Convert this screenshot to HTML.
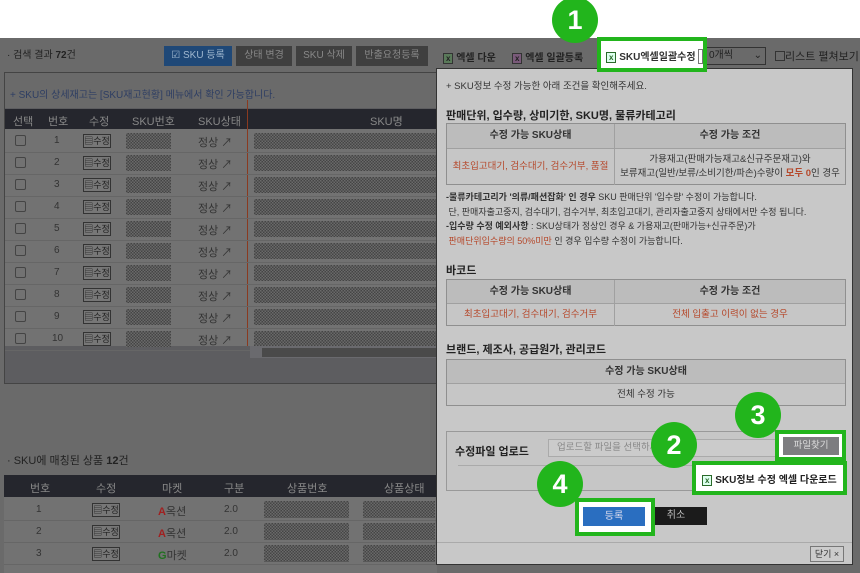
<!DOCTYPE html>
<html style="width:860px;height:573px;overflow:hidden"><head><meta charset="utf-8"><style>
*{margin:0;padding:0;box-sizing:border-box}
body{width:860px;height:573px;overflow:hidden;position:relative;background:#fff;font-family:"Liberation Sans","Noto Sans CJK KR",sans-serif;font-size:10px;color:#222}
.a{position:absolute}
.hatch{background:repeating-conic-gradient(#454545 0 25%,#6a6a6a 0 50%) 0 0/3px 3px}
.g{border:4px solid #22b51c}
.c{position:absolute;border-radius:50%;background:#22b51c;color:#fff;font-weight:bold;font-size:27px;text-align:center;font-family:"Liberation Sans",sans-serif}
.tb{position:absolute;background:#c6c6c6;border:1px solid #8f8f8f}
.tb .h{background:#bcbcbc;border-bottom:1px solid #a0a0a0;font-weight:bold;text-align:center;color:#333}
.red{color:#b5482b}
</style></head><body>
<div class="a" style="left:0;top:38px;width:860px;height:535px;background:#6a6a6a"></div>
<div class="a" style="left:7px;top:46px;color:#222;font-size:10px">· 검색 결과 <b>72</b>건</div>
<div class="a" style="left:164px;top:46px;width:68px;height:20px;background:#1f4877;color:#9fb7cf;text-align:center;line-height:20px">☑ SKU 등록</div>
<div class="a" style="left:236px;top:46px;width:56px;height:20px;background:#3f3f3f;color:#888;text-align:center;line-height:20px">상태 변경</div>
<div class="a" style="left:296px;top:46px;width:56px;height:20px;background:#3f3f3f;color:#888;text-align:center;line-height:20px">SKU 삭제</div>
<div class="a" style="left:356px;top:46px;width:72px;height:20px;background:#3f3f3f;color:#888;text-align:center;line-height:20px">반출요청등록</div>
<div class="a" style="left:443px;top:49px;font-weight:bold;color:#222"><span style="border:1px solid #333;background:#5a7a5a;padding:0 2px;font-size:8px">x</span> 엑셀 다운</div>
<div class="a" style="left:512px;top:49px;font-weight:bold;color:#222"><span style="border:1px solid #333;background:#7a5a7a;padding:0 2px;font-size:8px">x</span> 엑셀 일괄등록</div>
<div class="a" style="left:706px;top:47px;width:60px;height:18px;border:1px solid #333;color:#222;line-height:16px;padding-left:2px">0개씩 <span style="float:right;padding-right:3px">⌄</span></div>
<div class="a" style="left:775px;top:48px;color:#222;font-size:11px"><span style="display:inline-block;width:10px;height:10px;border:1px solid #333;vertical-align:-1px"></span>리스트 펼쳐보기</div>
<div class="a" style="left:4px;top:72px;width:440px;height:312px;border:1px solid #444;background:#5d5d60"></div>
<div class="a" style="left:5px;top:73px;width:438px;height:35px;background:#6a6a6a"></div>
<div class="a" style="left:10px;top:86px;color:#2e3e63">+ SKU의 상세재고는 [SKU재고현황] 메뉴에서 확인 가능합니다.</div>
<div class="a" style="left:5px;top:109px;width:438px;height:20px;background:#25262d"></div>
<div class="a" style="left:5px;top:113px;width:438px;color:#888;font-size:11px">
<span class="a" style="left:8px">선택</span><span class="a" style="left:43px">번호</span><span class="a" style="left:84px">수정</span><span class="a" style="left:127px">SKU번호</span><span class="a" style="left:193px">SKU상태</span><span class="a" style="left:365px">SKU명</span></div>
<div class="a" style="left:5px;top:129px;width:438px;height:217px;background:#727272"></div>
<div class="a" style="left:247px;top:100px;width:1px;height:246px;background:#8a3a20"></div>
<div id="rows"></div>
<div class="a" style="left:250px;top:346px;width:190px;height:12px;background:#6a6a6e"></div>
<div class="a" style="left:262px;top:348px;width:180px;height:9px;background:#4a4a4a"></div>
<div class="a" style="left:7px;top:452px;color:#222;font-size:11px">· SKU에 매칭된 상품 <b>12</b>건</div>
<div class="a" style="left:4px;top:475px;width:433px;height:22px;background:#25262d"></div>
<div class="a" style="left:4px;top:480px;width:433px;color:#888;font-size:11px">
<span class="a" style="left:26px">번호</span><span class="a" style="left:92px">수정</span><span class="a" style="left:158px">마켓</span><span class="a" style="left:220px">구분</span><span class="a" style="left:283px">상품번호</span><span class="a" style="left:380px">상품상태</span></div>
<div class="a" style="left:4px;top:497px;width:433px;height:76px;background:#727272"></div>
<div id="brows"></div>
<div class="a" style="left:436px;top:68px;width:417px;height:497px;background:#c8c8c8;border:1px solid #333"></div>
<div class="a" style="left:446px;top:78px;color:#333;font-size:9.5px">+ SKU정보 수정 가능한 아래 조건을 확인해주세요.</div>
<div class="a" style="left:446px;top:107px;font-weight:bold;font-size:11px;color:#222">판매단위, 입수량, 상미기한, SKU명, 물류카테고리</div>
<div class="tb" style="left:446px;top:123px;width:400px;height:62px">
<div class="h" style="height:25px;line-height:24px;display:flex"><div style="width:168px;border-right:1px solid #a0a0a0">수정 가능 SKU상태</div><div style="flex:1">수정 가능 조건</div></div>
<div style="display:flex;height:36px;font-size:9.5px"><div class="red" style="width:168px;border-right:1px solid #a0a0a0;text-align:center;line-height:36px">최초입고대기, 검수대기, 검수거부, 품절</div><div style="flex:1;text-align:center;line-height:14px;padding-top:4px;color:#333">가용재고(판매가능재고&amp;신규주문재고)와<br>보류재고(일반/보류/소비기한/파손)수량이 <b class="red">모두 0</b>인 경우</div></div></div>
<div class="a" style="left:446px;top:190px;font-size:9px;color:#333;line-height:14.5px"><b>-물류카테고리가 '의류/패션잡화' 인 경우</b> SKU 판매단위 '입수량' 수정이 가능합니다.<br>&nbsp;단, 판매자출고중지, 검수대기, 검수거부, 최초입고대기, 관리자출고중지 상태에서만 수정 됩니다.<br><b>-입수량 수정 예외사항</b> : SKU상태가 정상인 경우 &amp; 가용재고(판매가능+신규주문)가<br>&nbsp;<span class="red">판매단위입수량의 50%미만</span> 인 경우 입수량 수정이 가능합니다.</div>
<div class="a" style="left:446px;top:262px;font-weight:bold;font-size:11px;color:#222">바코드</div>
<div class="tb" style="left:446px;top:279px;width:400px;height:47px">
<div class="h" style="height:24px;line-height:23px;display:flex"><div style="width:168px;border-right:1px solid #a0a0a0">수정 가능 SKU상태</div><div style="flex:1">수정 가능 조건</div></div>
<div class="red" style="display:flex;height:22px;line-height:21px;text-align:center;font-size:9.5px"><div style="width:168px;border-right:1px solid #a0a0a0">최초입고대기, 검수대기, 검수거부</div><div style="flex:1">전체 입출고 이력이 없는 경우</div></div></div>
<div class="a" style="left:446px;top:341px;font-weight:bold;font-size:11px;color:#222">브랜드, 제조사, 공급원가, 관리코드</div>
<div class="tb" style="left:446px;top:359px;width:400px;height:47px">
<div class="h" style="height:24px;line-height:23px">수정 가능 SKU상태</div>
<div style="height:22px;line-height:21px;text-align:center;color:#333;font-size:9.5px">전체 수정 가능</div></div>
<div class="a" style="left:446px;top:431px;width:400px;height:60px;border:1px solid #999;background:#c6c6c6"></div>
<div class="a" style="left:458px;top:465px;width:380px;height:1px;background:#aaa"></div>
<div class="a" style="left:455px;top:443px;font-weight:bold;font-size:11px;color:#222">수정파일 업로드</div>
<div class="a" style="left:548px;top:439px;width:230px;height:18px;border:1px solid #aaa;background:#cbcbcb;color:#888;line-height:16px;padding-left:8px;font-size:9.5px">업로드할 파일을 선택하세요</div>
<div class="a" style="left:645px;top:507px;width:62px;height:18px;background:#1b1b1b;color:#bbb;text-align:center;line-height:18px">취소</div>
<div class="a" style="left:437px;top:542px;width:415px;height:1px;background:#aaa"></div>
<div class="a" style="left:810px;top:546px;width:34px;height:16px;border:1px solid #777;background:#ccc;color:#333;text-align:center;line-height:14px;font-size:9px">닫기 ×</div>
<div class="a g" style="left:597px;top:37px;width:110px;height:35px;background:#fff"></div>
<div class="a" style="left:606px;top:48px;font-weight:bold;color:#333;font-size:10px"><span style="border:1px solid #2a6a2a;color:#2a6a2a;background:#dfe;padding:0 2px;font-size:8px">x</span> SKU엑셀일괄수정 <span style="display:inline-block;width:5px;height:15px;border:1px solid #777;vertical-align:-4px"></span></div>
<div class="c" style="left:552px;top:-3px;width:46px;height:46px;line-height:46px">1</div>
<div class="a g" style="left:775px;top:430px;width:71px;height:31px;background:#fff"></div>
<div class="a" style="left:783px;top:437px;width:56px;height:18px;background:#7d7d80;color:#ddd;text-align:center;line-height:18px;font-size:9.5px">파일찾기</div>
<div class="a g" style="left:692px;top:461px;width:155px;height:34px;background:#fff"></div>
<div class="a" style="left:702px;top:471px;font-weight:bold;color:#222;font-size:10px"><span style="border:1px solid #2a6a2a;color:#2a6a2a;background:#dfe;padding:0 2px;font-size:8px">x</span> SKU정보 수정 엑셀 다운로드</div>
<div class="c" style="left:735px;top:392px;width:46px;height:46px;line-height:46px">3</div>
<div class="c" style="left:651px;top:422px;width:46px;height:46px;line-height:46px">2</div>
<div class="a g" style="left:575px;top:498px;width:80px;height:38px;background:#fff"></div>
<div class="a" style="left:583px;top:507px;width:62px;height:19px;background:#2a6ec0;color:#dde;text-align:center;line-height:19px">등록</div>
<div class="c" style="left:537px;top:461px;width:46px;height:46px;line-height:46px">4</div>
<script>
var r='';for(var i=0;i<10;i++){var y=131+i*22;
r+='<div class="a" style="left:5px;top:'+(y+21)+'px;width:432px;height:1px;background:#666"></div>'+
'<div class="a" style="left:15px;top:'+(y+4)+'px;width:11px;height:11px;border:1px solid #444;border-radius:2px"></div>'+
'<div class="a" style="left:'+(i==9?52:54)+'px;top:'+(y+4)+'px;color:#333">'+(i+1)+'</div>'+
'<div class="a" style="left:83px;top:'+(y+3)+'px;width:28px;height:14px;border:1px solid #333;background:#777;color:#222;font-size:9px;line-height:12px;text-align:center">▤수정</div>'+
'<div class="a hatch" style="left:126px;top:'+(y+2)+'px;width:45px;height:16px"></div>'+
'<div class="a" style="left:198px;top:'+(y+3)+'px;color:#333;font-size:11px">정상 ↗</div>'+
'<div class="a hatch" style="left:254px;top:'+(y+2)+'px;width:186px;height:16px"></div>';}
document.getElementById('rows').innerHTML=r;
var m=[['A','옥션','#a02020'],['A','옥션','#a02020'],['G','마켓','#207020']];r='';
for(var i=0;i<3;i++){var y=499+i*22;
r+='<div class="a" style="left:4px;top:'+(y+21)+'px;width:433px;height:1px;background:#666"></div>'+
'<div class="a" style="left:36px;top:'+(y+5)+'px;color:#333">'+(i+1)+'</div>'+
'<div class="a" style="left:92px;top:'+(y+4)+'px;width:28px;height:14px;border:1px solid #333;background:#777;color:#222;font-size:9px;line-height:12px;text-align:center">▤수정</div>'+
'<div class="a" style="left:158px;top:'+(y+4)+'px;color:#333;font-size:11px"><b style="color:'+m[i][2]+'">'+m[i][0]+'</b>'+m[i][1]+'</div>'+
'<div class="a" style="left:224px;top:'+(y+5)+'px;color:#333">2.0</div>'+
'<div class="a hatch" style="left:264px;top:'+(y+2)+'px;width:85px;height:17px"></div><div class="a hatch" style="left:363px;top:'+(y+2)+'px;width:72px;height:17px"></div>';}
document.getElementById('brows').innerHTML=r;
</script>
</body></html>
